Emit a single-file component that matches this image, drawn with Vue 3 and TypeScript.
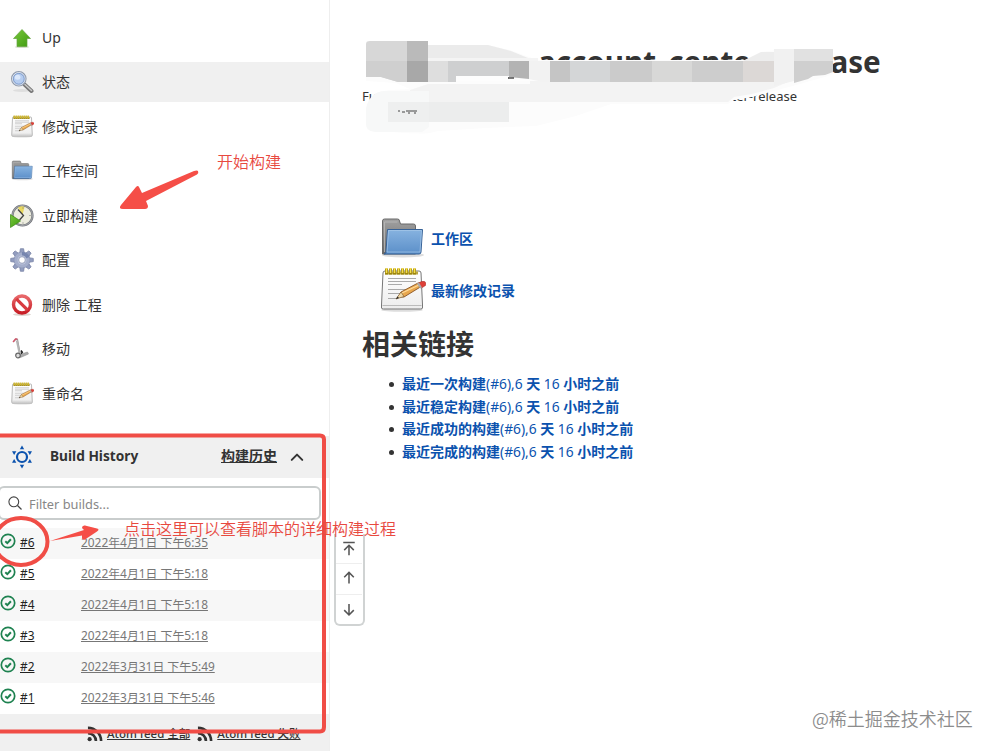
<script setup lang="ts">
interface Task { icon: string; label: string; active?: boolean }
interface Build { id: number; date: string }

const tasks: Task[] = [
  { icon: 'up', label: 'Up' },
  { icon: 'search', label: '状态', active: true },
  { icon: 'notepad', label: '修改记录' },
  { icon: 'folder', label: '工作空间' },
  { icon: 'clock', label: '立即构建' },
  { icon: 'gear', label: '配置' },
  { icon: 'delete', label: '删除 工程' },
  { icon: 'move', label: '移动' },
  { icon: 'notepad', label: '重命名' },
]
const builds: Build[] = [
  { id: 6, date: '2022年4月1日 下午6:35' },
  { id: 5, date: '2022年4月1日 下午5:18' },
  { id: 4, date: '2022年4月1日 下午5:18' },
  { id: 3, date: '2022年4月1日 下午5:18' },
  { id: 2, date: '2022年3月31日 下午5:49' },
  { id: 1, date: '2022年3月31日 下午5:46' },
]
const feeds = ['全部', '失败']
const links = [
  ['最近一次构建', '(#6),6 ', '天', ' 16 ', '小时之前'],
  ['最近稳定构建', '(#6),6 ', '天', ' 16 ', '小时之前'],
  ['最近成功的构建', '(#6),6 ', '天', ' 16 ', '小时之前'],
  ['最近完成的构建', '(#6),6 ', '天', ' 16 ', '小时之前'],
]
const teeth = [0, 45, 90, 135, 180, 225, 270, 315]
const rays = [0, 60, 120, 180, 240, 300]
</script>

<template>
  <div class="page">
    <svg class="defs" width="0" height="0">
      <defs>
        <linearGradient id="g-blue" x1="0" y1="0" x2="0" y2="1"><stop offset="0" stop-color="#87b3e0" /><stop offset="1" stop-color="#5b8fc9" /></linearGradient>
        <linearGradient id="g-grey" x1="0" y1="0" x2="0" y2="1"><stop offset="0" stop-color="#a2a2a2" /><stop offset="1" stop-color="#666" /></linearGradient>
        <linearGradient id="g-green" x1="0" y1="0" x2="1" y2="1"><stop offset="0" stop-color="#78c83c" /><stop offset="1" stop-color="#3f9a10" /></linearGradient>
        <linearGradient id="g-red" x1="0" y1="0" x2="0" y2="1"><stop offset="0" stop-color="#e8686a" /><stop offset="1" stop-color="#c81e26" /></linearGradient>
        <linearGradient id="g-paper" x1="0" y1="0" x2="0" y2="1"><stop offset="0" stop-color="#fff" /><stop offset="1" stop-color="#ececec" /></linearGradient>
        <symbol id="i-folder" viewBox="0 0 48 48">
          <ellipse cx="25" cy="40" rx="21" ry="2.5" fill="#ddd" />
          <path d="M4.500 39V6q0-2 2-2h13q2 0 2 2l1 3h13q2 0 2 2v28z" fill="url(#g-grey)" stroke="#696969" />
          <path d="M6.500 37V7h13" fill="none" stroke="#bbb" stroke-width=".8" />
          <path d="M9.500 14.500h35L43 37q0 2-2 2H6q2 0 2-2z" fill="url(#g-blue)" stroke="#376297" />
          <path d="M10.500 15.500h33L42 37H9z" fill="none" stroke="#a7c8ea" stroke-width=".7" />
        </symbol>
        <symbol id="i-notepad" viewBox="0 0 48 48">
          <ellipse cx="24" cy="43" rx="21" ry="1.800" fill="#ddd" />
          <path d="M7 4h34q2 0 2 2l1.500 32v3q0 1-2 1h-37q-2 0-2-1v-3L5 6q0-2 2-2z" fill="url(#g-paper)" stroke="#777" />
          <path d="M4.500 38.500h39" stroke="#bbb" />
          <path d="M7 4.500h33v3H7z" fill="#b8a542" />
          <path d="M8.500 1.500v6m4-6v6m4-6v6m4-6v6m4-6v6m4-6v6m4-6v6m4-6v6" stroke="#9c850c" stroke-width="3" />
          <path d="M8.500 1v5m4-5v5m4-5v5m4-5v5m4-5v5m4-5v5m4-5v5m4-5v5" stroke="#f5dd4c" stroke-width="1.600" />
          <path d="M10 11.500h28M10 14.500h28M10 17.500h14M10 22.500h28M10 26.500h18M10 31.500h10" stroke="#aaa" />
          <path d="m20 30 3-5 17-9q4-1 4 3L26 30z" fill="#e9a84e" stroke="#8a5423" stroke-width=".9" />
          <path d="m24 26 18-8.500" stroke="#ffdb98" stroke-width="1.300" />
          <path d="m18 32 5-7 3 4.500z" fill="#eed9a8" stroke="#765025" stroke-width=".6" />
          <path d="m18 32 3-1-1.500-1.500z" fill="#222" />
          <path d="m40.500 16 3-1.500q4-1 4.500 2l-.500 2-4 2.500z" fill="#de4038" stroke="#9f2b24" stroke-width=".5" />
          <path d="m39 16.500 3 5 2-1-3-5z" fill="#aaa" />
        </symbol>
        <symbol id="i-up" viewBox="0 0 24 24">
          <ellipse cx="12" cy="21" rx="7" ry="1" fill="#d2dcc7" />
          <path d="M12 3.500 20.500 12.500H17v8H7v-8H3.500z" fill="url(#g-green)" stroke="#64a43f" stroke-width=".7" />
        </symbol>
        <symbol id="i-search" viewBox="0 0 24 24">
          <ellipse cx="12" cy="20.500" rx="9" ry="1.500" fill="#dedede" />
          <path d="m14.500 14.500 7 6.500" stroke="#777" stroke-width="4" stroke-linecap="round" />
          <path d="m15 14.500 6.500 6" stroke="#c8c8c8" stroke-width="1.600" stroke-linecap="round" />
          <circle cx="8.800" cy="8.800" r="7" fill="#bfd4f3" stroke="#909bad" stroke-width="1.600" />
          <circle cx="8.800" cy="8.800" r="6.300" fill="none" stroke="#edf1f8" stroke-width=".8" />
          <circle cx="8.800" cy="8.800" r="5.400" fill="#b6cdf0" stroke="#718fc3" stroke-width=".8" />
          <ellipse cx="7.600" cy="7.200" rx="2.800" ry="2.500" fill="#dbe8fb" />
        </symbol>
        <symbol id="i-clock" viewBox="0 0 24 24">
          <circle cx="12.500" cy="11.500" r="10" fill="#ededdf" stroke="#74767a" stroke-width="2.200" />
          <circle cx="12.500" cy="11.500" r="10" fill="none" stroke="#b1b5bb" stroke-width=".8" />
          <path d="M12.500 11 8 3.500q4-2 6.500-.500z" fill="#e9d85e" />
          <path d="m8 5.500 5.500 6-4 4.500" fill="none" stroke="#444" stroke-width="1.300" />
          <path d="M13 4.500v-1m0 16v-1m6.500-7h1" stroke="#777" />
          <path d="M.500 10.500 10.500 17 .500 23.500z" fill="url(#g-green)" stroke="#38880e" stroke-width=".7" />
        </symbol>
        <symbol id="i-gear" viewBox="0 0 24 24">
          <g fill="#929dbf" stroke="#707b9f" stroke-width=".7">
            <path v-for="a in teeth" :key="a" d="M9.700 5 10.400.700h3.200l.700 4.300z" :transform="`rotate(${a} 12 12)`" />
          </g>
          <circle cx="12" cy="12" r="8" fill="#a4aecb" stroke="#8a94b6" stroke-width=".6" />
          <path d="M12 4a8 8 0 0 1 7.500 5L12 12z" fill="#7786af" />
          <circle cx="12" cy="12" r="4.500" fill="#bec6dc" />
          <circle cx="12" cy="12" r="3.300" fill="#fff" stroke="#7c88a9" stroke-width=".7" />
        </symbol>
        <symbol id="i-delete" viewBox="0 0 24 24">
          <ellipse cx="12" cy="21.500" rx="9" ry="1.500" fill="#ddd4cf" />
          <circle cx="12" cy="11.500" r="8.500" fill="#fff" stroke="url(#g-red)" stroke-width="3.400" />
          <path d="m6.300 5.800 11.400 11.400" stroke="#d93b40" stroke-width="3.200" />
        </symbol>
        <symbol id="i-move" viewBox="0 0 24 24">
          <path d="M4 4.500 6 2l1.500.500L10 16" fill="none" stroke="#999" stroke-width="1.200" />
          <path d="M6.800 3.500 9.500 16" stroke="#b5b5b5" stroke-width="2" />
          <path d="m3 5 2.500-3 2 .2" fill="none" stroke="#d45268" stroke-width="1.300" />
          <path d="m10 17.500 7.500-2.500 1 2-8 3.500z" fill="#aaa" stroke="#888" stroke-width=".5" />
          <circle cx="8" cy="18.500" r="2.300" fill="#ddd" stroke="#666" stroke-width="1.200" />
          <path d="m11 13.500 1.300 1.800-1.300 1.500" stroke="#222" stroke-width="1.500" fill="none" />
        </symbol>
      </defs>
    </svg>

    <aside class="side">
      <nav class="tasks">
        <a v-for="t in tasks" :key="t.label" class="task" :class="{ active: t.active }">
          <svg class="task-icon"><use :href="`#i-${t.icon}`" /></svg>
          <span>{{ t.label }}</span>
        </a>
      </nav>

      <section class="history">
        <header class="history-head">
          <svg class="sun" viewBox="0 0 24 24">
            <circle cx="12" cy="12" r="5" fill="none" stroke="#0b52ae" stroke-width="2.200" />
            <path v-for="a in rays" :key="a" d="M12 .500 14.200 4.200H9.800z" fill="#0b52ae" :transform="`rotate(${a} 12 12)`" />
          </svg>
          <strong class="history-title">Build History</strong>
          <a class="trend">构建历史</a>
          <svg class="chevron" viewBox="0 0 12 12"><path d="m1.500 8.500 4.500-4.500 4.500 4.500" fill="none" stroke="#333" stroke-width="1.700" stroke-linecap="round" stroke-linejoin="round" /></svg>
        </header>
        <div class="filter">
          <svg viewBox="0 0 14 14"><circle cx="5.800" cy="5.800" r="4.900" fill="none" stroke="#444" stroke-width="1.100" /><path d="m9.500 9.500 4 4" stroke="#444" stroke-width="1.200" /></svg>
          <span>Filter builds...</span>
        </div>
        <div class="builds">
          <div v-for="b in builds" :key="b.id" class="build">
            <svg class="ok" viewBox="0 0 16 16"><circle cx="8" cy="8" r="6.700" fill="none" stroke="#1e8250" stroke-width="1.700" /><path d="m5.300 8.300 2 1.900 3.600-3.900" fill="none" stroke="#1e8250" stroke-width="2" /></svg>
            <a class="number">#{{ b.id }}</a>
            <a class="date">{{ b.date }}</a>
          </div>
        </div>
        <footer class="feeds">
          <a v-for="f in feeds" :key="f" class="feed">
            <svg viewBox="0 0 17 17"><path d="M1 2a14 14 0 0 1 14 14M1 7.500A8.500 8.500 0 0 1 9.500 16" fill="none" stroke="#333" stroke-width="2.800" /><circle cx="2.800" cy="14" r="2.200" fill="#333" /></svg>
            <span>Atom feed {{ f }}</span>
          </a>
        </footer>
      </section>
    </aside>

    <main class="main">
      <h1 class="title">account_center-release</h1>
      <div class="full-name"><span>Fu</span><span>ter-release</span></div>
      <div class="shortcuts">
        <a class="shortcut"><svg><use href="#i-folder" /></svg>工作区</a>
        <a class="shortcut"><svg><use href="#i-notepad" /></svg>最新修改记录</a>
      </div>
      <h2 class="related">相关链接</h2>
      <ul class="permalinks">
        <li v-for="l in links" :key="l[0]"><a><template v-for="(part, i) in l" :key="i"><b v-if="i % 2 === 0">{{ part }}</b><span v-else>{{ part }}</span></template></a></li>
      </ul>
    </main>

    <svg class="redaction" width="500" height="110" viewBox="355 30 500 110">
      <path d="M371 98q4-7 19-8l20-1-14-6-30-2V41h62v4h60l22 5 22 8 8 2h205l16-8 22-3h50v25l-8 3-15 4-10 3-26 7-22 6-18 3-6 4H611l-35 12-40 10-50 2-48 3q-14 6-68-2l-4-5V110z" fill="#fcfcfc" />
      <path d="M410 90l18-6h102V81h260l-16 7-22 6-18 3-6 5H411z" fill="#f3f3f3" />
      <path d="M456 76h53l20 4v1h-73z" fill="#fdfdfd" />
      <path d="M366 108q4-16 18-17h45v36l-7 5h-44q-12 0-12-8z" fill="#f7f8f8" />
      <path d="M366 44q0-3 4-3h37v41h-9l-17-5h-15z" fill="#d7d7d7" />
      <path d="M366 61h41v21h-9l-17-5h-15z" fill="#cfcfcf" />
      <path d="M407 41h21v20h-21z" fill="#bababa" /><path d="M407 61h21v21h-21z" fill="#a8a8a8" />
      <path d="M428 45h60l23 6 17 7h-100z" fill="#ebebeb" /><path d="M428 58h110v3H428z" fill="#f4f4f4" />
      <path d="M428 61h22v21h-22z" fill="#dedede" /><path d="M448 61h61v15h-53v6h-8z" fill="#cecfd0" />
      <path d="M509 61h20v18l-20-2z" fill="#b3b3b3" />
      <path d="M529 61h21v21h-7l-14-3z" fill="#f2f2f2" />
      <path d="M550 61h20v21h-20z" fill="#c5c5c5" /><path d="M570 61h40v21h-40z" fill="#d4d6d7" />
      <path d="M610 61h42v21h-42z" fill="#cbcbcb" /><path d="M652 61h40v21h-40z" fill="#d8d8d7" />
      <path d="M692 61h51v21h-51z" fill="#cdcdcd" /><path d="M743 61h31v21h-31z" fill="#dcd8d6" />
      <path d="m743 61 18-9h13v9z" fill="#ededed" /><path d="M774 49h20v32l-20 5z" fill="#f1f1f1" />
      <path d="M794 49h39v12h-39z" fill="#e1e1e1" /><path d="M794 61h39v11l-8 3-12 1-5 3-14 4z" fill="#cfcfcf" />
      <path d="M388 102h41v20h-41z" fill="#eeefef" /><path d="M429 102h80v20h-80z" fill="#eceded" />
      <path d="M398 111h2m2 1h3m1-1h11m-9 2h2m4 0h2" stroke="#444" stroke-width="1" />
      <path d="M508 78h6" stroke="#333" stroke-width="1.300" />
    </svg>

    <div class="pager">
      <svg viewBox="0 0 16 16"><path d="M2 1.500h12M8 15V5M3 9.500l5-5 5 5" /></svg>
      <svg viewBox="0 0 16 16"><path d="M8 14V3M3 7.500l5-5 5 5" /></svg>
      <svg viewBox="0 0 16 16"><path d="M8 2v11M3 8.500l5 5 5-5" /></svg>
    </div>

    <svg class="marks" width="420" height="751" viewBox="0 0 420 751">
      <g fill="none" stroke="#f04d46" stroke-width="4">
        <path d="M-2 435.500H320q4 0 4 4V727q0 4.500-4 4.500H-2" />
        <ellipse cx="21" cy="541.500" rx="26.500" ry="23.500" />
      </g>
      <path d="M198 171q1 2-1 3.500L146 201l2 5q0 3-3 3h-22q-5 0-2-4l15-18q2-2 3 0l3 6 52-22q3-1 4 0z" fill="#f54e47" />
      <path d="m50 541 34-11-2-2q0-3 3-2.500l12 3q3 1 0 3l-12 8q-3 1-3-2v-2z" fill="#f54e47" />
    </svg>
    <div class="note start">开始构建</div>
    <div class="note detail">点击这里可以查看脚本的详细构建过程</div>
    <div class="credit">@稀土掘金技术社区</div>
  </div>
</template>

<style>
body { margin: 0; background: #fff; overflow: hidden; }
</style>

<style scoped>
.page { position: relative; display: flex; width: 994px; height: 751px; overflow: hidden; color: #333; font: 14px/20px "Noto Sans", "Noto Sans CJK SC", sans-serif; }
.defs { position: absolute; }
.side { box-sizing: border-box; width: 330px; height: 751px; border-right: 1px solid #eee; display: flex; flex-direction: column; overflow: hidden; }
.tasks { display: flex; flex-direction: column; gap: 4.5px; padding-top: 17.5px; }
.task { display: flex; align-items: center; gap: 8px; height: 40px; padding-left: 10px; }
.task.active { background: #f0f0f0; }
.task-icon { width: 24px; height: 24px; flex: none; }
.history { margin-top: 22px; }
.history-head { display: flex; align-items: center; height: 42px; background: #f0f0f0; padding: 0 25px 0 10px; }
.sun { width: 24px; height: 24px; margin-right: 16px; }
.history-title { font-size: 13.7px; font-weight: 700; padding-bottom: 1px; }
.trend { margin-left: auto; font-weight: 700; text-decoration: underline; padding-bottom: 1px; }
.chevron { width: 14px; height: 14px; margin-left: 13px; }
.filter { display: flex; align-items: center; gap: 7px; box-sizing: border-box; width: 323px; height: 34px; margin: 8px 0 8px -2px; padding-left: 8px; border: 2px solid #c9cdcd; border-radius: 6px; color: #878787; font-size: 12.8px; }
.filter svg { width: 14px; height: 14px; }
.filter span { padding-top: 2px; }
.build { display: flex; align-items: center; height: 31px; font-size: 11.9px; }
.build:nth-child(odd) { background: #f7f7f7; }
.build a { padding-bottom: 2px; }
.ok { width: 16px; height: 16px; margin-top: -4px; }
.number { width: 61px; margin-left: 4px; text-decoration: underline; color: #222; }
.date { color: #777; text-decoration: underline; }
.feeds { display: flex; gap: 7px; height: 40px; padding-left: 87px; background: #f0f0f0; font-size: 11.5px; }
.feed { display: flex; align-items: center; gap: 4px; height: 40px; font-weight: 500; text-decoration: underline; }
.feed svg { width: 16px; height: 16px; }
.main { padding: 42px 0 0 32px; flex: 1; }
.title { margin: 0 0 0 176px; font-size: 29.6px; line-height: 40px; font-weight: 700; }
.full-name { display: flex; justify-content: space-between; width: 435px; margin-top: 4px; font-size: 13px; }
.shortcuts { display: flex; flex-direction: column; gap: 4px; margin: 109px 0 0 16px; }
.shortcut { display: flex; align-items: center; gap: 5px; height: 48px; color: #0b52ae; font-weight: 700; }
.shortcut svg { width: 48px; height: 48px; }
.related { margin: 9px 0 0; font-size: 28px; line-height: 40px; font-weight: 700; }
.permalinks { margin: 9px 0 0; padding: 0 0 0 27px; list-style: none; font-size: 14px; line-height: 22.700px; }
.permalinks a { color: #0b52ae; white-space: pre-wrap; }
.permalinks a span { font-size: 13.8px; }
.permalinks li { display: flex; align-items: center; gap: 8px; }
.permalinks li::before { content: ""; width: 5px; height: 5px; border-radius: 50%; background: #333; }
.redaction { position: absolute; left: 355px; top: 30px; }
.pager { position: absolute; left: 334px; top: 534px; box-sizing: border-box; width: 31px; height: 92px; border: 2px solid #d0d3d3; border-top: 0; border-radius: 0 0 6px 6px; display: flex; flex-direction: column; background: #fff; }
.pager svg { width: 16px; height: 16px; padding: 7px 5px; fill: none; stroke: #555; stroke-width: 1.6; }
.pager svg + svg { border-top: 1px solid #eee; }
.pager svg:nth-child(2) { padding: 6px 5px 8px; }
.marks { position: absolute; left: 0; top: 0; }
.note { position: absolute; color: #e8493f; font-family: "Noto Sans CJK SC", sans-serif; font-weight: 350; white-space: nowrap; }
.start { left: 217px; top: 151px; font-size: 16px; }
.detail { left: 124px; top: 518px; font-size: 16px; }
.credit { position: absolute; left: 812px; top: 708px; font-family: "Noto Sans CJK SC", sans-serif; font-size: 18px; font-weight: 350; color: #8c8c8c; white-space: nowrap; }
</style>
